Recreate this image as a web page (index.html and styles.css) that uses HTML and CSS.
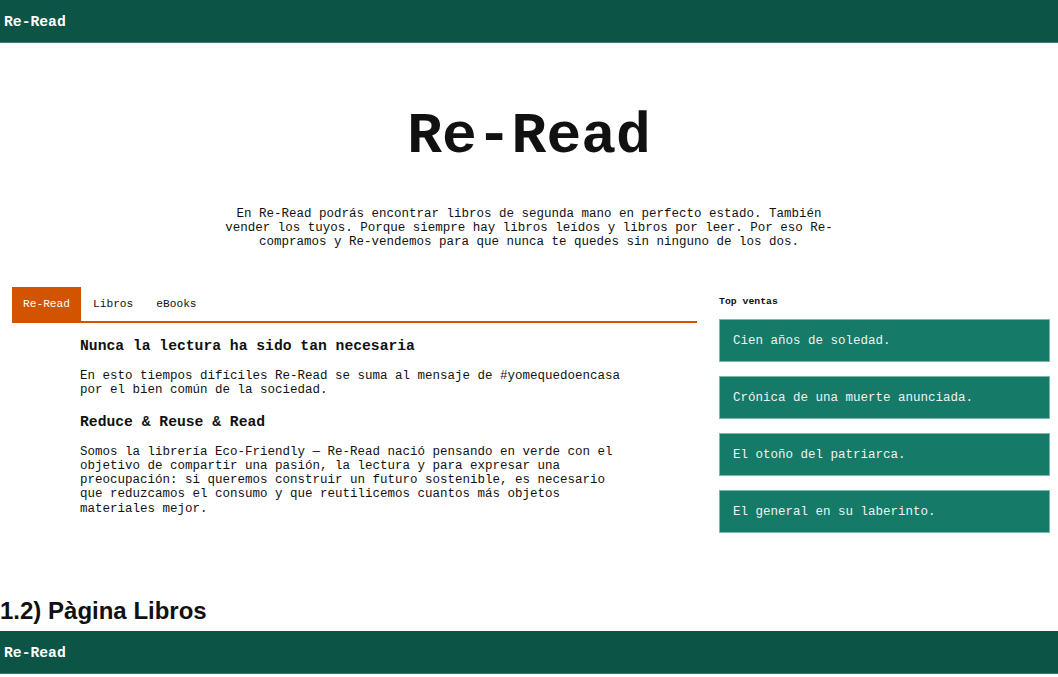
FILE: index.html
```html
<!DOCTYPE html>
<html lang="es">
<head>
<meta charset="utf-8">
<title>Re-Read</title>
<link rel="stylesheet" href="styles.css">
</head>
<body>
<div class="page">
  <header class="topbar"><span class="brand">Re-Read</span></header>
  <section class="hero">
    <h1 class="hero-title">Re-Read</h1>
    <p class="hero-text">En Re-Read podrás encontrar libros de segunda mano en perfecto estado. También vender los tuyos. Porque siempre hay libros leídos y libros por leer. Por eso Re-compramos y Re-vendemos para que nunca te quedes sin ninguno de los dos.</p>
  </section>
  <main class="main">
    <div class="left">
      <nav class="tabs">
        <a class="tab active">Re-Read</a>
        <a class="tab">Libros</a>
        <a class="tab">eBooks</a>
      </nav>
      <article class="content">
        <h3 class="sub">Nunca la lectura ha sido tan necesaria</h3>
        <p class="txt">En esto tiempos difíciles Re-Read se suma al mensaje de #yomequedoencasa por el bien común de la sociedad.</p>
        <h3 class="sub">Reduce &amp; Reuse &amp; Read</h3>
        <p class="txt">Somos la librería Eco-Friendly — Re-Read nació pensando en verde con el objetivo de compartir una pasión, la lectura y para expresar una preocupación: si queremos construir un futuro sostenible, es necesario que reduzcamos el consumo y que reutilicemos cuantos más objetos materiales mejor.</p>
      </article>
    </div>
    <aside class="right">
      <h4 class="top-title">Top ventas</h4>
      <div class="card">Cien años de soledad.</div>
      <div class="card">Crónica de una muerte anunciada.</div>
      <div class="card">El otoño del patriarca.</div>
      <div class="card">El general en su laberinto.</div>
    </aside>
  </main>
</div>
<h2 class="section-title">1.2) Pàgina Libros</h2>
<header class="topbar"><span class="brand">Re-Read</span></header>
</body>
</html>
```
FILE: styles.css
```css
html, body {
  margin: 0;
  padding: 0;
  background: #ffffff;
}
body {
  font-family: "Courier New", "Nimbus Mono PS", "Nimbus Mono L", "FreeMono", "Liberation Mono", monospace;
  color: #111;
  overflow: hidden;
}
.topbar {
  height: 43px;
  box-sizing: border-box;
  padding: 2px 0 0 4px;
  background: #0c5446;
  border-bottom: 1px solid #3e7b6d;
  display: flex;
  align-items: center;
}
.brand {
  color: #ffffff;
  font-weight: bold;
  font-size: 14.7px;
}
.hero {
  display: flex;
  flex-direction: column;
  align-items: center;
}
.hero-title {
  margin: 65px 0 0;
  font-size: 58px;
  line-height: 58px;
  font-weight: bold;
  color: #111;
}
.hero-text {
  margin: 41px 0 0;
  width: 620px;
  text-align: center;
  font-size: 12.5px;
  line-height: 14px;
}
.main {
  display: flex;
  gap: 22px;
  padding: 0 8px 0 12px;
  margin-top: 38px;
}
.left {
  flex: 1;
}
.tabs {
  display: flex;
  height: 34px;
  border-bottom: 2px solid #d35400;
}
.tab {
  display: flex;
  align-items: center;
  padding: 0 11px 0 12px;
  font-size: 11.2px;
  color: #111;
}
.tab.active {
  background: #d35400;
  color: #fff;
  padding: 0 11px;
}
.content {
  margin-left: 68px;
  width: 550px;
  padding-top: 14px;
}
.sub {
  margin: 0;
  font-size: 14.7px;
  line-height: 18px;
  font-weight: bold;
}
.txt {
  margin: 14px 0 15px;
  font-size: 12.5px;
  line-height: 14.3px;
}
.right {
  width: 331px;
  display: flex;
  flex-direction: column;
  gap: 14px;
}
.top-title {
  margin: 9px 0 -3px;
  font-size: 9.8px;
  line-height: 12px;
  font-weight: bold;
}
.card {
  height: 43px;
  box-sizing: border-box;
  background: #157a67;
  border: 1px solid #7db9ab;
  color: #f2f2f2;
  font-size: 12.5px;
  display: flex;
  align-items: center;
  padding-left: 13px;
}
.section-title {
  font-family: "Liberation Sans", Arial, sans-serif;
  font-size: 24px;
  line-height: 27px;
  margin: 64px 0 7px;
  color: #111;
}
```
